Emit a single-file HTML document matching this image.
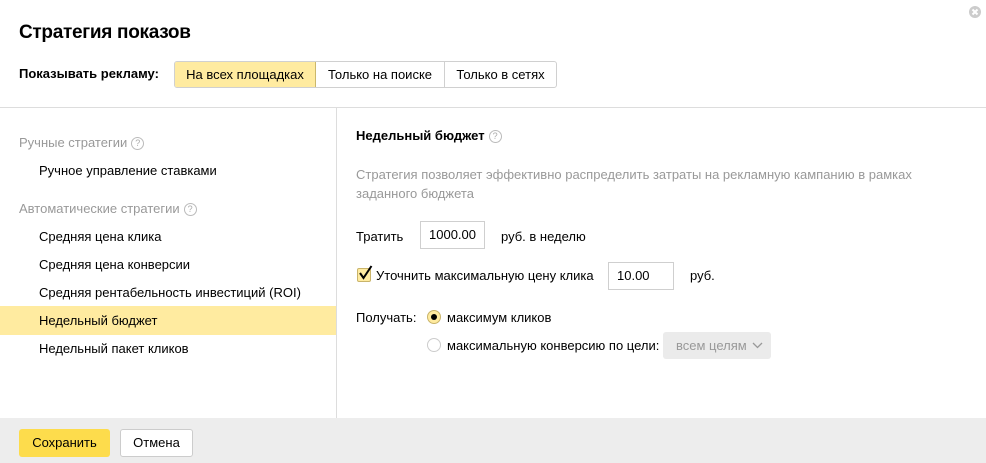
<!DOCTYPE html>
<html><head><meta charset="utf-8"><style>
*{margin:0;padding:0;box-sizing:border-box}
body{width:986px;height:463px;background:#fff;font-family:"Liberation Sans",sans-serif;font-size:13px;color:#000;position:relative;overflow:hidden;letter-spacing:0}
.a{position:absolute;white-space:nowrap;line-height:16px}
.g{color:#999}
.q{display:inline-block;width:13px;height:13px;border:1px solid #bbb;border-radius:50%;font-size:9px;line-height:11px;text-align:center;color:#aaa;vertical-align:1px;margin-left:4px;letter-spacing:0}
.inp{position:absolute;border:1px solid #cfcfcf;background:#fff;padding:0 8px;line-height:26px}
</style></head><body>
<div class="a" style="left:19px;top:22px;font-size:19px;line-height:22px;font-weight:bold;letter-spacing:-0.3px">Стратегия показов</div>
<div style="position:absolute;left:969px;top:6px;width:12px;height:12px;border-radius:50%;background:#ccc"></div>
<svg style="position:absolute;left:969px;top:6px" width="12" height="12"><path d="M3.5 3.5L8.5 8.5M8.5 3.5L3.5 8.5" stroke="#fff" stroke-width="2"/></svg>
<div class="a" style="left:19px;top:66px;font-weight:bold">Показывать рекламу:</div>
<div style="position:absolute;left:174px;top:61px;height:27px;display:flex;border:1px solid #d0d0d0;border-radius:3px;overflow:hidden">
<div style="width:141px;background:#ffeba0;border-right:1px solid #cbb86c;text-align:center;line-height:25px">На всех площадках</div>
<div style="width:129px;border-right:1px solid #d0d0d0;text-align:center;line-height:25px">Только на поиске</div>
<div style="width:111px;text-align:center;line-height:25px">Только в сетях</div>
</div>
<div style="position:absolute;left:0;top:107px;width:986px;height:1px;background:#ddd"></div>
<div style="position:absolute;left:336px;top:108px;width:1px;height:310px;background:#ddd"></div>
<div style="position:absolute;left:0;top:306px;width:336px;height:29px;background:#ffeba0"></div>
<div class="a g" style="left:19px;top:135px">Ручные стратегии<span class="q">?</span></div>
<div class="a" style="left:39px;top:163px">Ручное управление ставками</div>
<div class="a g" style="left:19px;top:201px">Автоматические стратегии<span class="q">?</span></div>
<div class="a" style="left:39px;top:229px">Средняя цена клика</div>
<div class="a" style="left:39px;top:257px">Средняя цена конверсии</div>
<div class="a" style="left:39px;top:285px">Средняя рентабельность инвестиций (ROI)</div>
<div class="a" style="left:39px;top:313px">Недельный бюджет</div>
<div class="a" style="left:39px;top:341px">Недельный пакет кликов</div>

<div class="a" style="left:356px;top:128px;font-weight:bold">Недельный бюджет<span class="q" style="font-weight:normal">?</span></div>
<div class="a g" style="left:356px;top:165px;line-height:19px">Стратегия позволяет эффективно распределить затраты на рекламную кампанию в рамках<br>заданного бюджета</div>
<div class="a" style="left:356px;top:229px">Тратить</div>
<div class="inp" style="left:420px;top:221px;width:65px;height:28px;overflow:hidden;padding-right:0"><div style="width:53px;overflow:hidden">1000.00</div></div>
<div class="a" style="left:501px;top:229px">руб. в неделю</div>
<div style="position:absolute;left:357px;top:268px;width:14px;height:14px;background:#ffeba0;border:1px solid #c9b46a;border-radius:2px"></div>
<svg style="position:absolute;left:358px;top:264px" width="16" height="18"><path d="M2 9 L5.5 14 L13.5 2" fill="none" stroke="#000" stroke-width="2"/></svg>
<div class="a" style="left:376px;top:268px">Уточнить максимальную цену клика</div>
<div class="inp" style="left:608px;top:262px;width:66px;height:28px">10.00</div>
<div class="a" style="left:690px;top:268px">руб.</div>
<div class="a" style="left:356px;top:310px">Получать:</div>
<div style="position:absolute;left:427px;top:310px;width:14px;height:14px;border-radius:50%;background:#ffeba0;border:1px solid #c9b46a"></div>
<div style="position:absolute;left:431px;top:314px;width:6px;height:6px;border-radius:50%;background:#000"></div>
<div class="a" style="left:447px;top:310px">максимум кликов</div>
<div style="position:absolute;left:427px;top:338px;width:14px;height:14px;border-radius:50%;border:1px solid #ccc;background:#fff"></div>
<div class="a" style="left:447px;top:338px">максимальную конверсию по цели:</div>
<div style="position:absolute;left:663px;top:332px;width:108px;height:27px;background:#ebebeb;border-radius:3px;color:#999;line-height:27px;padding-left:13px">всем целям <svg width="11" height="7" style="vertical-align:1px;margin-left:2px"><path d="M1 1 L5.5 5.5 L10 1" fill="none" stroke="#999" stroke-width="1.3"/></svg></div>

<div style="position:absolute;left:0;top:418px;width:986px;height:45px;background:#ededed"></div>
<div style="position:absolute;left:19px;top:429px;width:91px;height:28px;background:#fddc4c;border-radius:3px;text-align:center;line-height:28px">Сохранить</div>
<div style="position:absolute;left:120px;top:429px;width:73px;height:28px;background:#fff;border:1px solid #ccc;border-radius:3px;text-align:center;line-height:26px">Отмена</div>
</body></html>
